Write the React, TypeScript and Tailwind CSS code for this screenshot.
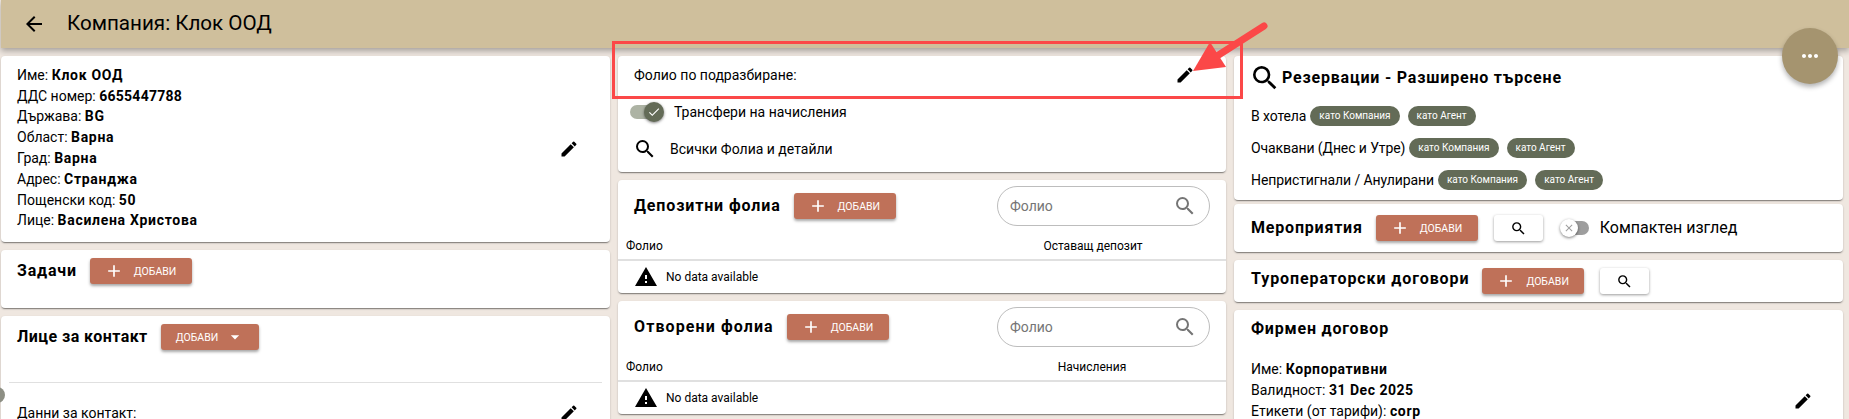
import {
  MdAdd,
  MdArrowBack,
  MdArrowDropDown,
  MdCheck,
  MdClose,
  MdEdit,
  MdMoreHoriz,
  MdSearch,
  MdWarning,
} from 'react-icons/md';

const cardClass = 'bg-white rounded-[4px] shadow-[0_2px_1px_-1px_rgba(0,0,0,0.3),0_1px_2px_rgba(0,0,0,0.25)]';

function AddButton() {
  return (
    <button className="flex h-[26px] w-[102px] shrink-0 items-center gap-[10px] rounded-[3px] bg-[#bf7159] pl-[14px] text-[10.5px] text-white shadow-[0_2px_3px_rgba(0,0,0,0.35)]">
      <MdAdd className="h-5 w-5" />
      <span>ДОБАВИ</span>
    </button>
  );
}

function SearchButton() {
  return (
    <button className="flex h-[26px] w-[49px] shrink-0 items-center justify-center rounded-[3px] bg-white shadow-[0_1px_3px_rgba(0,0,0,0.4)]">
      <MdSearch className="h-[17px] w-[17px] text-black" />
    </button>
  );
}

function Field({ label, value, valueClass = 'tracking-[0.7px]' }: { label: string; value: string; valueClass?: string }) {
  return (
    <p className="h-[20.8px] leading-[20.8px]">
      {label}: <b className={`font-bold ${valueClass}`}>{value}</b>
    </p>
  );
}

function Chip({ children }: { children: string }) {
  return (
    <span className="flex h-5 items-center rounded-full bg-[#636b57] px-[9px] text-[10px] text-white">{children}</span>
  );
}

function FolioTable({ title, titleClass, column, colWidth }: { title: string; titleClass: string; column: string; colWidth: string }) {
  return (
    <section className={`${cardClass} h-[113px]`}>
      <div className="flex h-[52px] items-center px-4">
        <h3 className={`mr-[13px] text-base font-bold ${titleClass}`}>{title}</h3>
        <AddButton />
        <div className="ml-auto flex h-10 w-[213px] items-center justify-between rounded-full border border-[#bdbdbd] pl-3 pr-3 text-sm text-[#757575]">
          <span>Фолио</span>
          <MdSearch className="h-6 w-6" />
        </div>
      </div>
      <div className="flex h-[29px] items-center justify-between border-b-2 border-[#e0e0e0] pl-2 text-xs">
        <span>Фолио</span>
        <span className={`${colWidth} text-center`}>{column}</span>
      </div>
      <div className="flex h-8 items-center gap-2 pl-4 text-xs">
        <MdWarning className="h-6 w-6" />
        <span>No data available</span>
      </div>
    </section>
  );
}

function ChipRow({ label }: { label: string }) {
  return (
    <div className="flex h-8 items-center gap-2">
      <span className="mr-[-4px] tracking-[-0.1px]">{label}</span>
      <Chip>като Компания</Chip>
      <Chip>като Агент</Chip>
    </div>
  );
}

export default function App() {
  return (
    <div className="relative h-[419px] w-[1849px] overflow-hidden bg-[#efe7e0] text-sm text-black [font-family:Roboto,'Noto_Sans',sans-serif]">
      <header className="ml-px flex h-12 items-center bg-[#cfbf9c] pl-[21px] shadow-[0_3px_6px_rgba(0,0,0,0.3)]">
        <MdArrowBack className="h-6 w-6" />
        <h1 className="ml-[21px] text-[20.6px]">Компания: Клок ООД</h1>
      </header>

      <main className="grid grid-cols-[609px_608px_609px] gap-x-2 pl-px pt-2">
        {/* left column */}
        <div className="flex flex-col gap-2">
          <section className={`${cardClass} flex h-[186px] items-center justify-between pl-4 pr-[31px]`}>
            <div className="mb-[2px]">
              <Field label="Име" value="Клок ООД" />
              <Field label="ДДС номер" value="6655447788" valueClass="tracking-[0.25px]" />
              <Field label="Държава" value="BG" />
              <Field label="Област" value="Варна" />
              <Field label="Град" value="Варна" />
              <Field label="Адрес" value="Странджа" />
              <Field label="Пощенски код" value="50" />
              <Field label="Лице" value="Василена Христова" />
            </div>
            <MdEdit className="h-5 w-5" />
          </section>

          <section className={`${cardClass} h-[58px] pl-4 pt-2`}>
            <div className="flex items-center gap-[13px]">
              <h3 className="text-base font-bold tracking-[0.8px]">Задачи</h3>
              <AddButton />
            </div>
          </section>

          <section className={`${cardClass} h-[200px] pt-2`}>
            <div className="flex items-center gap-[13px] pl-4">
              <h3 className="text-base font-bold tracking-[0.45px]">Лице за контакт</h3>
              <button className="flex h-[26px] w-[98px] items-center gap-[7px] rounded-[3px] bg-[#bf7159] pl-[15px] text-[10.5px] text-white shadow-[0_2px_3px_rgba(0,0,0,0.35)]">
                ДОБАВИ
                <MdArrowDropDown className="h-5 w-5" />
              </button>
            </div>
            <div className="mx-2 mt-8 border-t border-[#e0e0e0]" />
            <div className="flex items-center justify-between pl-4 pr-[31px] pt-[20px]">
              <span>Данни за контакт:</span>
              <MdEdit className="h-5 w-5" />
            </div>
          </section>
        </div>

        {/* middle column */}
        <div className="flex flex-col gap-2">
          <section className={`${cardClass} h-[116px]`}>
            <div className="flex h-[38px] items-center justify-between pl-4 pr-[31px]">
              <span>Фолио по подразбиране:</span>
              <MdEdit className="h-5 w-5" />
            </div>
            <div className="flex h-[36px] items-center pl-3">
              <div className="relative h-[14px] w-[30px] rounded-full bg-[#adb3a4]">
                <span className="absolute -top-[3px] left-[14px] flex h-5 w-5 items-center justify-center rounded-full bg-[#636b57] shadow-[0_1px_3px_rgba(0,0,0,0.5)]">
                  <MdCheck className="h-[14px] w-[14px] text-white" />
                </span>
              </div>
              <span className="ml-[14px]">Трансфери на начисления</span>
            </div>
            <div className="flex h-[38px] items-center pl-[15px]">
              <MdSearch className="h-6 w-6" />
              <span className="ml-[13px]">Всички Фолиа и детайли</span>
            </div>
          </section>
          <FolioTable title="Депозитни фолиа" titleClass="tracking-[0.87px]" column="Оставащ депозит" colWidth="w-[266px]" />
          <FolioTable title="Отворени фолиа" titleClass="tracking-[1.1px]" column="Начисления" colWidth="w-[268px]" />
        </div>

        {/* right column */}
        <div className="flex flex-col gap-1">
          <section className={`${cardClass} h-[144px] pl-[17px] pt-[9px]`}>
            <div className="-ml-[2px] flex h-[26px] items-center gap-px">
              <MdSearch className="h-8 w-8" />
              <h3 className="text-base font-bold tracking-[0.8px]">Резервации - Разширено търсене</h3>
            </div>
            <div className="mt-[9px]">
              <ChipRow label="В хотела" />
              <ChipRow label="Очаквани (Днес и Утре)" />
              <ChipRow label="Непристигнали / Анулирани" />
            </div>
          </section>

          <section className={`${cardClass} flex h-12 items-center pl-[17px]`}>
            <h3 className="mr-[13px] text-base font-bold tracking-[0.8px]">Мероприятия</h3>
            <AddButton />
            <div className="ml-4"><SearchButton /></div>
            <div className="relative ml-[22px] h-[14px] w-[24px] rounded-full bg-[#9e9e9e]">
              <span className="absolute -top-[2px] -left-[5px] flex h-[18px] w-[18px] items-center justify-center rounded-full bg-white shadow-[0_1px_3px_rgba(0,0,0,0.5)]">
                <MdClose className="h-3 w-3 text-[#9e9e9e]" />
              </span>
            </div>
            <span className="ml-[11px] text-base">Компактен изглед</span>
          </section>

          <section className={`${cardClass} mt-1 flex h-[42px] items-center pl-[17px]`}>
            <h3 className="mb-1 mr-[13px] text-base font-bold tracking-[0.9px]">Туроператорски договори</h3>
            <AddButton />
            <div className="ml-4"><SearchButton /></div>
          </section>

          <section className={`${cardClass} mt-1 flex h-[160px] flex-col pl-[17px] pt-[7px]`}>
            <h3 className="text-base font-bold tracking-[0.8px]">Фирмен договор</h3>
            <div className="mt-[18px] flex items-center justify-between pr-[30px]">
              <div>
                <Field label="Име" value="Корпоративни" valueClass="tracking-[0.6px]" />
                <Field label="Валидност" value="31 Dec 2025" valueClass="tracking-[0.5px]" />
                <Field label="Етикети (от тарифи)" value="corp" />
              </div>
              <MdEdit className="mt-[22px] h-5 w-5" />
            </div>
          </section>
        </div>
      </main>

      {/* floating menu button */}
      <button className="absolute left-[1782px] top-[28px] flex h-14 w-14 items-center justify-center rounded-full bg-[#a5946f] text-white shadow-[0_3px_5px_rgba(0,0,0,0.3)]">
        <MdMoreHoriz className="h-6 w-6" />
      </button>

      {/* half hidden handle on the left edge */}
      <div className="absolute -left-[11px] top-[387px] h-4 w-4 rounded-full bg-[#8d8f84]" />

      {/* red annotation */}
      <div className="pointer-events-none absolute left-[612px] top-[41px] h-[58px] w-[631px] border-[3px] border-[#fb4848]" />
      <svg className="pointer-events-none absolute left-[1190px] top-[15px]" width="85" height="62" viewBox="0 0 85 62">
        <path d="M74 11 L27 41" stroke="#fb4848" strokeWidth="7" strokeLinecap="round" fill="none" />
        <path d="M3 56 L20 27 L36 52 Z" fill="#fb4848" />
      </svg>
    </div>
  );
}
